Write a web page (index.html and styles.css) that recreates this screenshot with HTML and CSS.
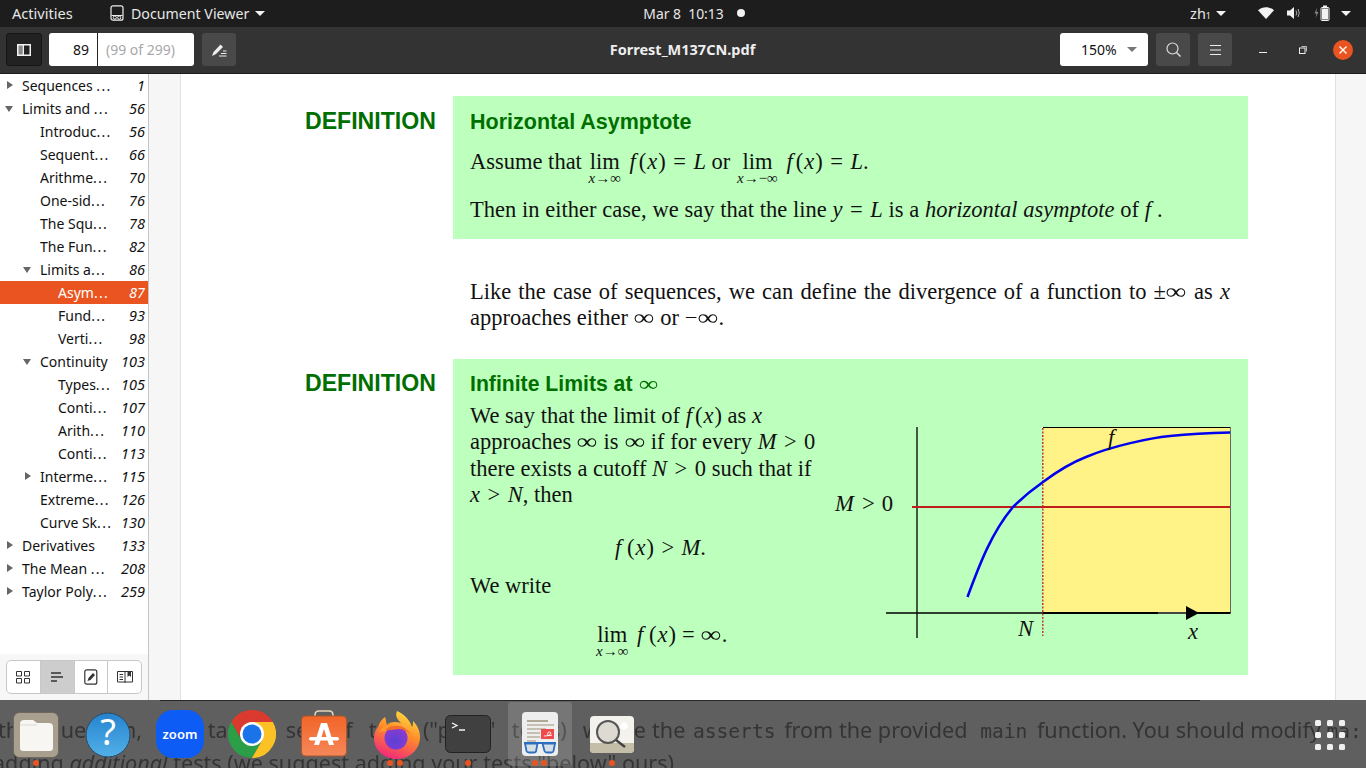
FILE: index.html
```html
<!DOCTYPE html>
<html lang="en">
<head>
<meta charset="utf-8">
<title>Forrest_M137CN.pdf</title>
<link rel="stylesheet" href="styles.css">
</head>
<body>
<header class="topbar">
  <div class="top-left">
    <span class="activities">Activities</span>
    <span class="appmenu">
      <svg class="appicon" width="14" height="16" viewBox="0 0 14 16"><rect x="1" y=".8" width="12" height="14.4" rx="2" fill="none" stroke="#eee" stroke-width="1.2"/><path d="M1.5 10.5h11" stroke="#eee"/><circle cx="4.8" cy="12.6" r="1.6" fill="none" stroke="#eee"/><circle cx="9.2" cy="12.6" r="1.6" fill="none" stroke="#eee"/></svg>
      <span>Document Viewer</span><i class="caret"></i>
    </span>
  </div>
  <div class="clock"><span>Mar 8&nbsp; 10:13</span><i class="clockdot"></i></div>
  <div class="top-right">
    <span class="ime">zh<small>1</small></span><i class="caret"></i>
    <svg class="wifi" width="16" height="12" viewBox="0 0 16 12"><path d="M0 3.2C4.5-.8 11.5-.8 16 3.2L8 12Z" fill="#f2f2f2"/></svg>
    <svg class="vol" width="15" height="14" viewBox="0 0 15 14"><path d="M0 4.5h3L7 1v12L3 9.5H0Z" fill="#f2f2f2"/><path d="M9 4.5q1.5 2.500 0 5M11 3q2.500 4 0 8" fill="none" stroke="#aaa" stroke-width="1"/></svg>
    <svg class="batt" width="16" height="16" viewBox="0 0 16 16"><path d="M3 3 .5 8.500h2L1.500 13 4.500 7h-2Z" fill="#888"/><rect x="7" y="2.500" width="8" height="13" rx="1" fill="none" stroke="#f2f2f2"/><rect x="9" y="0.500" width="4" height="2" fill="#f2f2f2"/><rect x="8" y="3.500" width="6" height="11" fill="#f2f2f2"/></svg>
    <i class="caret"></i>
  </div>
</header>

<div class="window">
  <div class="toolbar">
    <div class="tb-left">
      <button class="tbtn dark"><svg width="14" height="12" viewBox="0 0 14 12"><rect x="1" y="1" width="4.500" height="10" fill="#8a8a8a"/><path d="M.75.750h12.500v10.500H.75z" fill="none" stroke="#f2f2f2" stroke-width="1.500"/><path d="M6.250 1v10" stroke="#f2f2f2" stroke-width="1.500"/></svg></button>
      <div class="pagebox"><span class="pagenum">89</span><span class="pagelabel">(99 of 299)</span></div>
      <button class="tbtn"><svg width="16" height="14" viewBox="0 0 16 14"><path d="M1 13 2.500 9 9.500 1.500 12 4 5 11Z" fill="#eee"/><path d="M8 13h7.500M10 10.500h5.500M12 8h3.500" stroke="#eee" stroke-width="1"/></svg></button>
    </div>
    <div class="doctitle">Forrest_M137CN.pdf</div>
    <div class="tb-right">
      <div class="zoombox"><span>150%</span><i class="caret grey"></i></div>
      <button class="tbtn"><svg width="15" height="15" viewBox="0 0 15 15"><circle cx="6.500" cy="6.500" r="5.500" fill="none" stroke="#ddd" stroke-width="1.200"/><path d="m10.500 10.500 4 4" stroke="#ddd" stroke-width="1.400"/></svg></button>
      <button class="tbtn"><svg width="11" height="10" viewBox="0 0 11 10"><path d="M0 .5h11M0 5h11M0 9.500h11" stroke="#eee"/></svg></button>
      <div class="wincontrols">
        <span class="minbtn"></span>
        <svg class="restore" width="8" height="8" viewBox="0 0 8 8"><rect x=".5" y="2" width="5.500" height="5.500" fill="none" stroke="#eee"/><path d="M2.500 .5h5v5" fill="none" stroke="#bbb"/></svg>
        <span class="closebtn"><svg width="8" height="8" viewBox="0 0 8 8"><path d="m.5.500 7 7M7.500.500l-7 7" stroke="#fff" stroke-width="1.400"/></svg></span>
      </div>
    </div>
  </div>

  <div class="main">
    <aside class="sidebar">
      <ul class="outline">
        <li class="row"><i class="arrow right"></i><span class="t">Sequences <b class="el">...</b></span><em>1</em></li>
        <li class="row"><i class="arrow down"></i><span class="t">Limits and <b class="el">...</b></span><em>56</em></li>
        <li class="row l1"><span class="t">Introduc<b class="el">...</b></span><em>56</em></li>
        <li class="row l1"><span class="t">Sequent<b class="el">...</b></span><em>66</em></li>
        <li class="row l1"><span class="t">Arithme<b class="el">...</b></span><em>70</em></li>
        <li class="row l1"><span class="t">One-sid<b class="el">...</b></span><em>76</em></li>
        <li class="row l1"><span class="t">The Squ<b class="el">...</b></span><em>78</em></li>
        <li class="row l1"><span class="t">The Fun<b class="el">...</b></span><em>82</em></li>
        <li class="row l1a"><i class="arrow down"></i><span class="t">Limits a<b class="el">...</b></span><em>86</em></li>
        <li class="row l2 sel"><span class="t">Asym<b class="el">...</b></span><em>87</em></li>
        <li class="row l2"><span class="t">Fund<b class="el">...</b></span><em>93</em></li>
        <li class="row l2"><span class="t">Verti<b class="el">...</b></span><em>98</em></li>
        <li class="row l1a"><i class="arrow down"></i><span class="t">Continuity</span><em>103</em></li>
        <li class="row l2"><span class="t">Types<b class="el">...</b></span><em>105</em></li>
        <li class="row l2"><span class="t">Conti<b class="el">...</b></span><em>107</em></li>
        <li class="row l2"><span class="t">Arith<b class="el">...</b></span><em>110</em></li>
        <li class="row l2"><span class="t">Conti<b class="el">...</b></span><em>113</em></li>
        <li class="row l1a"><i class="arrow right"></i><span class="t">Interme<b class="el">...</b></span><em>115</em></li>
        <li class="row l1"><span class="t">Extreme<b class="el">...</b></span><em>126</em></li>
        <li class="row l1"><span class="t">Curve Sk<b class="el">...</b></span><em>130</em></li>
        <li class="row"><i class="arrow right"></i><span class="t">Derivatives</span><em>133</em></li>
        <li class="row"><i class="arrow right"></i><span class="t">The Mean <b class="el">...</b></span><em>208</em></li>
        <li class="row"><i class="arrow right"></i><span class="t">Taylor Poly<b class="el">...</b></span><em>259</em></li>
      </ul>
      <div class="sidefoot">
        <div class="segs">
          <span class="seg"><svg width="14" height="13" viewBox="0 0 14 13"><path d="M.5.500h5v4.500h-5zM8.500.500h5v4.500h-5zM.5 7.500h5V12h-5zM8.500 7.500h5V12h-5z" fill="none" stroke="#333"/></svg></span>
          <span class="seg on"><svg width="12" height="10" viewBox="0 0 12 10"><path d="M0 1h10M0 5h12M0 9h6" stroke="#333" stroke-width="1.600"/></svg></span>
          <span class="seg"><svg width="14" height="16" viewBox="0 0 14 16"><rect x=".8" y=".8" width="12" height="14.400" rx="2" fill="none" stroke="#333" stroke-width="1.200"/><path d="m3.500 12 1-3L9 4l2 2-4.500 5Z" fill="#333"/></svg></span>
          <span class="seg"><svg width="16" height="14" viewBox="0 0 16 14"><path d="M.5 1.500h15v10.500H.5zM8 1.500V13" fill="none" stroke="#333"/><path d="M10.500 1h3.500v6l-1.800-1.500L10.500 7Z" fill="#333"/><path d="M2.500 4.500h3.500M2.500 7h3.500M2.500 9.500h3.500" stroke="#333"/></svg></span>
        </div>
      </div>
    </aside>

    <div class="viewport">
      <article class="page">
        <section class="defrow first">
          <h2 class="deflabel">DEFINITION</h2>
          <div class="defbox box1">
            <h3 class="deftitle">Horizontal Asymptote</h3>
            <p class="line gap1">Assume that <span class="lim"><span>lim</span><small><i>x</i>→∞</small></span> <i class="f">f</i>(<i class="v">x</i>)<span class="op">=</span><i>L</i> or <span class="lim"><span>lim</span><small><i>x</i>→−∞</small></span> <i class="f">f</i>(<i class="v">x</i>)<span class="op">=</span><i>L</i>.</p>
            <p class="line gap2">Then in either case, we say that the line <i>y</i><span class="op">=</span><i>L</i> is a <i>horizontal asymptote</i> of <i>f</i> .</p>
          </div>
        </section>

        <p class="para"><span class="just">Like the case of sequences, we can define the divergence of a function to ±<span class="oo">∞</span> as <i>x</i></span>approaches either <span class="oo">∞</span> or −<span class="oo">∞</span>.</p>

        <section class="defrow">
          <h2 class="deflabel">DEFINITION</h2>
          <div class="defbox box2">
            <div class="col">
              <h3 class="deftitle small">Infinite Limits at <span class="inf oo">∞</span></h3>
              <p class="tight">We say that the limit of <i class="f">f</i>(<i class="v">x</i>) as <i>x</i><br>approaches <span class="oo">∞</span> is <span class="oo">∞</span> if for every <i>M</i><span class="op">&gt;</span>0<br>there exists a cutoff <i>N</i><span class="op">&gt;</span>0 such that if<br><i>x</i><span class="op">&gt;</span><i>N</i>, then</p>
              <p class="eq eq1"><i>f</i> (<i class="v">x</i>)<span class="op">&gt;</span><i>M</i>.</p>
              <p class="write">We write</p>
              <p class="eq eq2"><span class="lim"><span>lim</span><small><i>x</i>→∞</small></span> <i>f</i> (<i class="v">x</i>)<span class="op tightop">=</span><span class="oo">∞</span>.</p>
            </div>
            <svg class="graph" width="402" height="225" viewBox="830 420 402 225">
              <rect x="1043" y="427.500" width="187" height="185.500" fill="#fff387"/>
              <path d="M1043 427.500h187.500" fill="none" stroke="#000" stroke-width="1"/>
              <path d="M1230.500 428V613" stroke="#666" stroke-width="1"/>
              <path d="M917 427V638" stroke="#111" stroke-width="1.400"/>
              <path d="M886 613h157" stroke="#000" stroke-width="1.300"/>
              <path d="M1043 613h187.500" stroke="#000" stroke-width="2"/>
              <path d="M1158 613h30" stroke="#444" stroke-width="2"/>
              <path d="M1186 606 1199 613 1186 620Z" fill="#000"/>
              <path d="M912 507H1230" stroke="#c01d1d" stroke-width="2"/>
              <path d="M1042.800 428V636" stroke="#c01d1d" stroke-width="1.300" stroke-dasharray="2 1.500"/>
              <path d="M967.500 597C980 563 992 532 1013 507 1024 496 1033 489 1043 482 1055 473 1068 464 1086 457 1112 446 1150 438 1170 436 1190 434 1210 433 1230 432.500" fill="none" stroke="#0000f0" stroke-width="2.500"/>
              <text class="gt" x="1108" y="445"><tspan font-style="italic">f</tspan></text>
              <text class="gt" x="835" y="511"><tspan font-style="italic">M</tspan><tspan dx="8">&gt;</tspan><tspan dx="7">0</tspan></text>
              <text class="gt" x="1018" y="636"><tspan font-style="italic">N</tspan></text>
              <text class="gt" x="1188" y="639"><tspan font-style="italic">x</tspan></text>
            </svg>
          </div>
        </section>
      </article>
    </div>
  </div>
</div>

<footer class="dock">
  <div class="dockline"></div>
  <p class="behind b1"><span class="bl">the question, the target set of test ("print" tests) where</span><span class="br">the <code class="c1">asserts</code> from the provided <code class="c2">main</code> function. You should modify <code>ma:</code></span></p>
  <p class="behind b2">adding <i>additional</i> tests (we suggest adding your tests "below" ours).</p>
  <div class="launcher">
    <svg class="ic ic-files" width="46" height="46" viewBox="0 0 46 46"><rect x=".5" y=".5" width="45" height="45" rx="6" fill="#a89f8f" stroke="#6d675c"/><path d="M7 12q0-4 4-4h9l4 3h12q4 0 4 4v21q0 3-3 3H10q-3 0-3-3Z" fill="#f8f6f3"/><path d="M7 13h17" stroke="#ddd8d0"/></svg>
    <svg class="ic ic-help" width="46" height="46" viewBox="0 0 46 46"><defs><linearGradient id="hb" x1="0" y1="0" x2="0" y2="1"><stop offset="0" stop-color="#2583cf"/><stop offset="1" stop-color="#52b0e8"/></linearGradient></defs><circle cx="23" cy="23" r="22" fill="url(#hb)" stroke="#2b4a63"/><text class="qm" x="23" y="33">?</text></svg>
    <div class="ic ic-zoom">zoom</div>
    <svg class="ic ic-chrome" width="48" height="48" viewBox="0 0 48 48"><path d="M44.800 12A24 24 0 0 0 3.200 12L13.600 30 24 12Z" fill="#db3a2e"/><path d="M3.200 12A24 24 0 0 0 24 48L34.400 30 13.600 30Z" fill="#2c9e48"/><path d="M44.800 12A24 24 0 0 1 24 48L34.400 30 24 12Z" fill="#fcc225"/><circle cx="24" cy="24" r="12" fill="#fff"/><circle cx="24" cy="24" r="9.500" fill="#1a73e8"/></svg>
    <svg class="ic ic-store" width="46" height="48" viewBox="0 0 46 48"><path d="M14 9V6q0-4 4-4h10q4 0 4 4v3" fill="none" stroke="#e8d3b8" stroke-width="1.600"/><defs><linearGradient id="sb" x1="0" y1="0" x2="0" y2="1"><stop offset="0" stop-color="#f26527"/><stop offset="1" stop-color="#f5875a"/></linearGradient></defs><rect x=".5" y="7" width="45" height="40" rx="4" fill="url(#sb)" stroke="#a9572f"/><path d="M20 14h6l7 22h-5l-5-16-5 16h-5Z" fill="#fff"/><rect x="8" y="28" width="30" height="3.500" rx="1.700" fill="#fff"/></svg>
    <svg class="ic ic-fox" width="48" height="50" viewBox="0 0 48 50"><defs><linearGradient id="fa" x1=".7" y1="0" x2=".3" y2="1"><stop offset="0" stop-color="#ffdf3f"/><stop offset=".45" stop-color="#ff8a2a"/><stop offset="1" stop-color="#f2247f"/></linearGradient><radialGradient id="fp" cx=".45" cy=".65" r=".6"><stop offset="0" stop-color="#5b3fd6"/><stop offset="1" stop-color="#8a3bd0"/></radialGradient></defs><path d="M24 1C22 6 24 9 28 13 22 11 16 12 14 15 13 12 13 10 12 7 8 10 6 13 5 17 2 20 1 25 1 28 1 40 11 49 24 49 37 49 47 39 47 27 47 20 44 15 40 11 40 14 40 15 39 17 37 10 31 4 24 1Z" fill="url(#fa)"/><circle cx="23" cy="28" r="11.500" fill="url(#fp)"/><path d="M6 22c3-4 7-7 11-6-2 1-3 3-3 5-3 0-6 0-8 1Z" fill="#ff9a2e"/><path d="M12 20c3-3 8-5 14-4 6 1 10 5 12 9-3-3-7-6-12-6-5 0-10 2-14 1Z" fill="#f36d2b"/></svg>
    <svg class="ic ic-term" width="46" height="38" viewBox="0 0 46 38"><rect x=".5" y=".5" width="45" height="37" rx="5" fill="#404040" stroke="#222"/><path d="M7 8l5 2.500-5 2.500" fill="none" stroke="#fff" stroke-width="1.200"/><path d="M14 15h6" stroke="#fff" stroke-width="1.400"/></svg>
    <div class="active">
      <svg width="36" height="44" viewBox="0 0 36 44"><rect width="36" height="44" rx="4" fill="#eeeeee"/><path d="M5 9h21" stroke="#b0a896" stroke-width="2"/><path d="M5 13h27M5 17h19M5 21h13M5 25h13M5 29h9" stroke="#b8b1a0" stroke-width="1.600"/><rect x="19" y="17" width="13" height="10" fill="#f04b4b"/><path d="M22 24q6 0 7-3-1-2-3-.5-1 2 0 3 2 .5 4-.5" fill="none" stroke="#fff" stroke-width=".9"/><path d="M2 31h32" stroke="#2c6fbe" stroke-width="2"/><path d="M3 31.500h12.500l-1.500 8q-.5 1-2 1H7q-2 0-2.500-1.500Zm17.500 0H33l-1.500 7.500q-.5 1.500-2 1.500H25q-2 0-2.500-1.500Z" fill="#d5dde5" stroke="#2c6fbe" stroke-width="1.800"/></svg>
    </div>
    <svg class="ic ic-img" width="44" height="37" viewBox="0 0 44 37"><rect width="44" height="37" rx="4" fill="#f4f2ec"/><path d="M0 27h44v6q0 4-4 4H4q-4 0-4-4Z" fill="#c4bea8"/><circle cx="34" cy="10" r="3.600" fill="#fff"/><circle cx="18" cy="16" r="11" fill="#dddad2" stroke="#555" stroke-width="2"/><path d="m26 24 9 7" stroke="#444" stroke-width="2.400"/></svg>
  </div>
  <span class="dot d1"></span><span class="dot d2"></span><span class="dot d3"></span><span class="dot d4"></span><span class="dot d5"></span><span class="dot d6"></span><span class="dot d7"></span>
  <div class="appgrid"><i></i><i></i><i></i><i></i><i></i><i></i><i></i><i></i><i></i></div>
</footer>
</body>
</html>
```

FILE: styles.css
```css
* { box-sizing: border-box; }
html, body { margin: 0; padding: 0; }
body { width: 1366px; height: 768px; overflow: hidden; position: relative; background: #fff; font-family: "Noto Sans", sans-serif; font-size: 14px; }
p, h2, h3, ul { margin: 0; padding: 0; }
ul { list-style: none; }

.caret { display: inline-block; width: 0; height: 0; border-left: 5px solid transparent; border-right: 5px solid transparent; border-top: 5px solid #f2f2f2; }
.caret.grey { border-top-color: #777; }

.topbar { height: 27px; background: #1d1d1d; color: #e6e6e6; display: grid; grid-template-columns: 1fr auto 1fr; align-items: center; padding: 0 0 1px 12px; }
.top-left { display: flex; align-items: center; }
.activities { width: 98px; font-size: 14.6px; }
.appmenu { display: flex; align-items: center; font-size: 14.2px; }
.appicon { margin-right: 7px; }
.appmenu .caret { margin-left: 6px; }
.clock { display: flex; align-items: center; margin-left: 10px; font-size: 13.9px; }
.clockdot { width: 8px; height: 8px; border-radius: 50%; background: #f2f2f2; margin-left: 13px; }
.top-right { display: flex; align-items: center; justify-content: flex-end; padding-right: 15px; }
.ime { font-size: 14.5px; margin-right: 5px; }
.ime small { font-size: 9px; }
.wifi { margin-left: 32px; }
.vol { margin-left: 13px; }
.batt { margin-left: 12px; margin-right: 11px; }

.window { height: 673px; display: flex; flex-direction: column; }
.toolbar { height: 47px; background: #333; border-bottom: 1px solid #1c1c1c; display: grid; grid-template-columns: 1fr auto 1fr; align-items: center; padding: 0 13px 1px 6px; }
.tb-left, .tb-right { display: flex; align-items: center; }
.tb-right { justify-content: flex-end; }
.tbtn { width: 34px; height: 33px; border: 0; padding: 0; background: #494949; border-radius: 3px; display: flex; align-items: center; justify-content: center; }
.tbtn.dark { width: 36px; background: #222; border: 1px solid #151515; }
.pagebox { margin: 0 8px 0 7px; width: 145px; height: 33px; display: flex; align-items: center; background: #fff; border-radius: 3px; }
.pagenum { width: 49px; text-align: right; padding-right: 8px; height: 100%; line-height: 33px; border-right: 1px solid #222; color: #111; }
.pagelabel { margin-left: 8px; color: #a8a8a8; }
.doctitle { color: #eee; font-weight: 700; font-size: 14.5px; margin: 0 0 2px 6px; }
.zoombox { width: 88px; height: 33px; background: #fff; border-radius: 3px; display: flex; align-items: center; padding-left: 21px; margin-right: 8px; color: #111; }
.zoombox .caret { margin-left: 10px; }
.tb-right .tbtn + .tbtn { margin-left: 8px; }
.wincontrols { display: flex; align-items: center; margin-left: 27px; }
.minbtn { width: 8px; height: 1px; background: #eee; margin-top: 5px; }
.restore { margin-left: 32px; }
.closebtn { width: 20px; height: 20px; border-radius: 50%; background: #e95420; margin-left: 26px; display: flex; align-items: center; justify-content: center; }

.main { height: 626px; display: flex; }
.sidebar { width: 149px; flex: none; border-right: 1px solid #c6c6c6; background: #fff; display: flex; flex-direction: column; color: #111; }
.outline { height: 580px; }
.row { height: 23px; display: flex; align-items: center; padding: 0 3px 0 22px; position: relative; font-size: 14px; }
.row.l1 { padding-left: 40px; }
.row.l1a { padding-left: 40px; }
.row.l2 { padding-left: 58px; }
.row .t { flex: 1; white-space: nowrap; }
.row .el { font-weight: 400; letter-spacing: 1.3px; }
.row em { font-size: 14.5px; margin-bottom: 2px; }
.row.sel { background: #e95420; color: #fff; }
.arrow { position: absolute; width: 0; height: 0; }
.arrow.right { left: 7px; top: 7px; border-top: 4.500px solid transparent; border-bottom: 4.500px solid transparent; border-left: 6px solid #666; }
.arrow.down { left: 5px; top: 9px; border-left: 4.500px solid transparent; border-right: 4.500px solid transparent; border-top: 6px solid #666; }
.l1a .arrow.right { left: 25px; }
.l1a .arrow.down { left: 23px; }
.sidefoot { flex: 1; background: #f7f7f7; padding: 6px 6px; }
.segs { width: 136px; height: 34px; display: flex; background: #fff; border: 1px solid #c8c8c8; border-radius: 5px; overflow: hidden; }
.seg { flex: 1; display: flex; align-items: center; justify-content: center; border-left: 1px solid #c8c8c8; }
.seg:first-child { border-left: 0; }
.seg.on { background: #cdcdcd; }

.viewport { flex: 1; background: #f6f6f6; padding-left: 31px; overflow: hidden; }
.page { width: 1156px; height: 100%; background: #fff; border-left: 1px solid #e2e2e2; border-right: 1px solid #e0e0e0; padding: 22px 0 0 123px; font-family: "Liberation Serif", serif; font-size: 22.5px; color: #111; }
.defrow { display: flex; }
.deflabel { width: 149px; font: 700 23.100px/1 "Liberation Sans", sans-serif; color: #006f00; padding: 13px 0 0 1px; flex: none; }
.first .deflabel { padding-top: 14px; }
.defbox { width: 795px; background: #bdffbd; padding-left: 17px; }
.box1 { height: 143px; padding-top: 13px; }
.box2 { height: 316px; display: flex; }
.deftitle { font: 700 21.500px/26px "Liberation Sans", sans-serif; color: #006f00; }
.deftitle.small { font-size: 21.200px; }
.inf { font-family: "Liberation Serif", serif; font-weight: 400; }
.oo { display: inline-block; transform: scaleX(1.3); margin: 0 2.500px; }
.line { height: 26px; line-height: 26px; white-space: nowrap; }
.gap1 { margin-top: 14px; }
.gap2 { margin-top: 22px; word-spacing: .15px; }
.op { margin: 0 7.500px; }
.op.tightop { margin: 0 6px; }
.f { margin-right: 3px; }
.v { margin: 0 1px; }
.lim { display: inline-flex; flex-direction: column; align-items: center; line-height: 26px; height: 26px; margin: 0 3px 0 1px; }
.lim small { font-size: 15px; line-height: 14px; margin-top: -4px; white-space: nowrap; }
.para { margin: 40px 0 0 166px; width: 760px; line-height: 26px; height: 80px; }
.just { display: block; text-align: justify; text-align-last: justify; height: 26px; }
.col { width: 360px; flex: none; padding-top: 12px; }
.tight { line-height: 26.400px; margin-top: 6px; white-space: nowrap; }
.eq { white-space: nowrap; }
.eq1 { margin: 26px 0 0 145px; line-height: 26px; }
.write { margin-top: 12px; line-height: 26px; }
.eq2 { margin: 23px 0 0 125px; line-height: 26px; }
.graph { display: block; margin: 61px 0 0 0; flex: none; }
.gt { font-family: "Liberation Serif", serif; font-size: 22.700px; fill: #111; }

.dock { position: absolute; left: 0; right: 0; bottom: 0; height: 68px; background: #5f5f5f; overflow: hidden; }
.dockline { position: absolute; left: 160px; top: 0; width: 1040px; height: 1px; background: #262626; }
.behind { position: absolute; left: -2px; white-space: nowrap; font-size: 21.600px; color: #343434; filter: blur(.6px); line-height: 30px; }
.behind code { font-family: "DejaVu Sans Mono", monospace; font-size: 19.600px; }
.behind .c1 { margin: 0 3px 0 2px; }
.behind .c2 { margin: 0 4px 0 7px; }
.b1 { top: 15px; display: flex; }
.bl { display: block; width: 648px; text-align: justify; text-align-last: justify; }
.br { display: block; margin-left: 6px; white-space: pre; }
.b2 { top: 48px; left: -7px; }
.launcher { position: absolute; inset: 0; }
.ic { position: absolute; display: block; }
.ic-files { left: 13px; top: 12px; }
.ic-help { left: 85px; top: 12px; }
.qm { font: 400 36px "Noto Sans", sans-serif; fill: #fff; text-anchor: middle; }
.ic-zoom { left: 156px; top: 10px; width: 48px; height: 48px; border-radius: 17px; background: #0c5cf5; color: #fff; font: 600 13px/48px "Noto Sans", sans-serif; text-align: center; }
.ic-chrome { left: 228px; top: 10px; }
.ic-store { left: 301px; top: 9px; }
.ic-fox { left: 373px; top: 10px; }
.ic-term { left: 445px; top: 15px; }
.active { position: absolute; left: 508px; top: 2px; width: 64px; height: 64px; background: rgba(255,255,255,.15); border-radius: 3px; display: flex; align-items: center; justify-content: center; }
.ic-img { left: 590px; top: 16px; }
.dot { position: absolute; top: 60px; width: 6px; height: 6px; border-radius: 50%; background: #e95420; }
.d1 { left: 33px; }
.d2 { left: 387px; }
.d3 { left: 397px; }
.d4 { left: 465px; }
.d5 { left: 532px; }
.d6 { left: 541px; }
.d7 { left: 609px; }
.appgrid { position: absolute; left: 1315px; top: 20px; display: grid; grid-template-columns: repeat(3, 6px); grid-auto-rows: 6px; gap: 6px; }
.appgrid i { background: #f0f0f0; border-radius: 1.500px; }
```
